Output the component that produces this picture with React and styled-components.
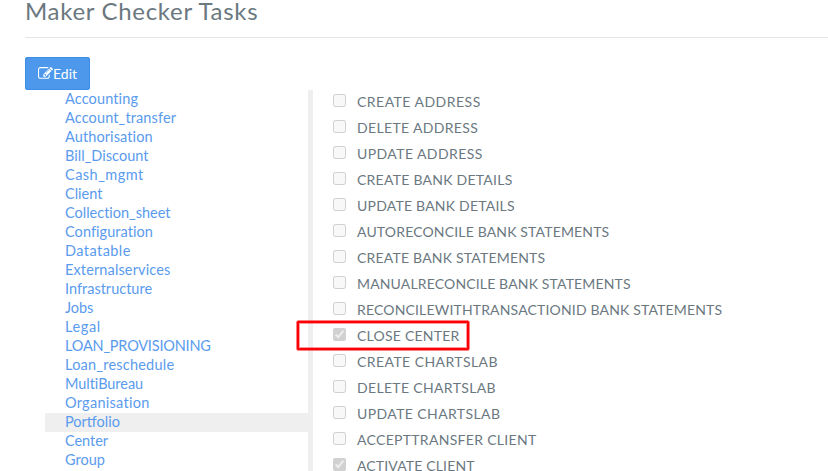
import React from "react";
import styled, { createGlobalStyle } from "styled-components";

const GlobalStyle = createGlobalStyle`
  *, *::before, *::after { box-sizing: border-box; }
  html, body { margin: 0; height: 100%; overflow: hidden; }
  body {
    background: #fff;
    color: #6b787f;
    font-family: Lato, "Open Sans", sans-serif;
    font-size: 14px;
    font-kerning: normal;
  }
`;

const Page = styled.main`
  height: 471px;
  padding-left: 25px;
  overflow: hidden;
  display: flex;
  flex-direction: column;
  align-items: stretch;
`;

const Title = styled.h1`
  flex: none;
  height: 38px;
  margin: 0 0 19px;
  border-bottom: 1px solid #e4e5e7;
  font-size: 24px;
  font-weight: 400;
  line-height: 21px;
  letter-spacing: 0.69px;
`;

const EditButton = styled.button`
  flex: none;
  align-self: flex-start;
  display: flex;
  align-items: center;
  width: 65px;
  height: 33px;
  padding: 0 0 1px 12px;
  border: 1px solid #3d8ee6;
  border-radius: 2px;
  background: #4e98ec;
  color: #fff;
  font: inherit;
  line-height: 19px;
`;

const EditIcon = styled.svg`
  flex: none;
  width: 15px;
  height: 15px;
  fill: currentColor;
`;

const Columns = styled.div`
  flex: 1;
  min-height: 0;
  display: grid;
  grid-template-columns: 263px 1fr;
  margin-left: 20px;
`;

const Groups = styled.nav`
  overflow: hidden;
`;

const GroupLink = styled.a`
  display: block;
  height: 19px;
  padding-left: 20px;
  background: ${({ $active }) => ($active ? "#efefef" : "transparent")};
  color: #5a9bee;
  font-size: 14.5px;
  line-height: 18px;
  letter-spacing: ${({ $tracking }) => $tracking}px;
  text-decoration: none;
  white-space: nowrap;
`;

const Tasks = styled.section`
  border-left: 5px solid #efefef;
  padding-left: 20px;
  overflow: hidden;
`;

const TaskRow = styled.label`
  display: flex;
  align-items: flex-start;
  gap: 11px;
  height: 26px;
  padding-top: 4px;
`;

const Checkbox = styled.input.attrs({ type: "checkbox", disabled: true, readOnly: true })`
  flex: none;
  width: 13px;
  height: 13px;
  margin: 0;
`;

const TaskName = styled.span`
  line-height: 16px;
  letter-spacing: ${({ $tracking }) => $tracking}px;
  white-space: nowrap;
`;

const Highlight = styled.div`
  position: absolute;
  left: 297px;
  top: 321px;
  width: 172px;
  height: 29px;
  border: 2px solid #fb0007;
  outline: 1px solid #fb000766;
  outline-offset: -3px;
  box-shadow: 0 0 0 0.5px #fb0007;
  border-radius: 1px;
  pointer-events: none;
`;

const groups = [
  ["Accounting", 0.13], ["Account_transfer", 0.13], ["Authorisation", 0.1],
  ["Bill_Discount", 0.03], ["Cash_mgmt", 0.47], ["Client", -0.02],
  ["Collection_sheet", -0.01], ["Configuration", 0.06], ["Datatable", 0.44],
  ["Externalservices", 0.13], ["Infrastructure", 0], ["Jobs", -0.1],
  ["Legal", 0.6], ["LOAN_PROVISIONING", -0.2], ["Loan_reschedule", 0.22],
  ["MultiBureau", -0.05], ["Organisation", 0.27], ["Portfolio", 0],
  ["Center", -0.05], ["Group", 0.02],
];

const tasks = [
  ["CREATE ADDRESS", 0.48], ["DELETE ADDRESS", 0.35], ["UPDATE ADDRESS", 0.42],
  ["CREATE BANK DETAILS", 0.25], ["UPDATE BANK DETAILS", 0.22],
  ["AUTORECONCILE BANK STATEMENTS", 0.16], ["CREATE BANK STATEMENTS", 0.2],
  ["MANUALRECONCILE BANK STATEMENTS", 0.15],
  ["RECONCILEWITHTRANSACTIONID BANK STATEMENTS", 0.165],
  ["CLOSE CENTER", 0.23, true], ["CREATE CHARTSLAB", 0.43],
  ["DELETE CHARTSLAB", 0.34], ["UPDATE CHARTSLAB", 0.4],
  ["ACCEPTTRANSFER CLIENT", 0.3], ["ACTIVATE CLIENT", 0.15, true],
];

export default function App() {
  return (
    <>
      <GlobalStyle />
      <Page>
        <Title>Maker Checker Tasks</Title>
        <EditButton type="button">
          <EditIcon viewBox="0 0 1792 1792" aria-hidden="true">
            <path d="M888 1184l116-116-152-152-116 116v56h96v96h56zm440-720q-16-16-33 1l-350 350q-17 17-1 33t33-1l350-350q17-17 1-33zm80 594v190q0 119-84.500 203.500t-203.500 84.500h-832q-119 0-203.500-84.500t-84.500-203.500v-832q0-119 84.500-203.500t203.500-84.500h832q63 0 117 25 15 7 18 23 3 17-9 29l-49 49q-14 14-32 8-23-6-45-6h-832q-66 0-113 47t-47 113v832q0 66 47 113t113 47h832q66 0 113-47t47-113v-126q0-13 9-22l64-64q15-15 35-7t20 29zm-96-738l288 288-672 672h-288v-288zm444 132l-92 92-288-288 92-92q28-28 68-28t68 28l152 152q28 28 28 68t-28 68z" />
          </EditIcon>
          Edit
        </EditButton>
        <Columns>
          <Groups>
            {groups.map(([name, tracking]) => (
              <GroupLink key={name} $tracking={tracking} $active={name === "Portfolio"}>
                {name}
              </GroupLink>
            ))}
          </Groups>
          <Tasks>
            {tasks.map(([name, tracking, checked]) => (
              <TaskRow key={name}>
                <Checkbox defaultChecked={!!checked} />
                <TaskName $tracking={tracking}>{name}</TaskName>
              </TaskRow>
            ))}
          </Tasks>
        </Columns>
        <Highlight />
      </Page>
    </>
  );
}
